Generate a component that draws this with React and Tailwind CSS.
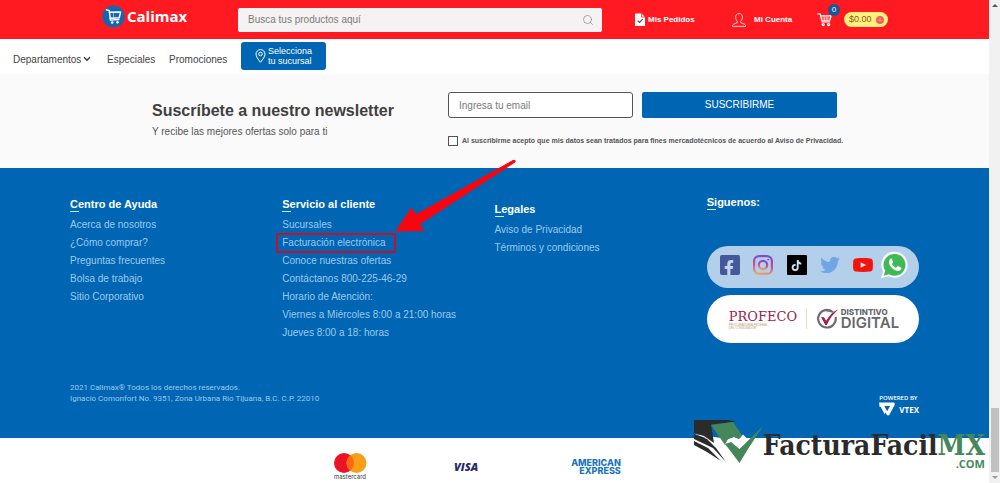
import { FaTwitter, FaTiktok, FaFacebookF } from "react-icons/fa";
import { Search, ChevronDown } from "lucide-react";

const helpLinks = [
  "Acerca de nosotros",
  "¿Cómo comprar?",
  "Preguntas frecuentes",
  "Bolsa de trabajo",
  "Sitio Corporativo",
];
const legalLinks = ["Aviso de Privacidad", "Términos y condiciones"];

function CartIcon({ className }) {
  return (
    <svg viewBox="0 0 16 16" className={className} fill="none" stroke="currentColor" strokeWidth="1.3" strokeLinejoin="round" strokeLinecap="round" aria-hidden="true">
      <path d="M1 2h2.400l2 8.600h8" />
      <path d="M3.900 4.200H15l-1.300 4.600H5" />
      <path d="M7.400 4.400l.6 4.200M10.800 4.400l-.2 4.200M4.600 6.500h9.600" strokeWidth=".7" />
      <circle cx="6.600" cy="13.400" r="1.100" />
      <circle cx="12.400" cy="13.400" r="1.100" />
    </svg>
  );
}

function Header() {
  return (
    <header className="flex h-[39px] items-center bg-[#ff1a21] pl-[102px] text-white">
      <a href="#inicio" className="flex w-[85px] shrink-0 items-center gap-[2px] pb-[7px]">
        <svg viewBox="0 0 24 24" className="size-[23px] shrink-0" aria-hidden="true">
          <circle cx="12" cy="12" r="11.600" fill="#1566b0" />
          <g fill="none" stroke="#fff" strokeWidth="1.500" strokeLinejoin="round" strokeLinecap="round">
            <path d="M4.600 5l3 .9 1.200 9.900 8.800-.6" />
            <path d="M7.800 7.600l11.600-.2-1.400 5.900-9.400.5" />
            <path d="M12 7.800l.2 5.400" strokeWidth=".6" />
          </g>
          <circle cx="10.600" cy="18.300" r="1.300" fill="#fff" />
          <circle cx="16.200" cy="18" r="1.300" fill="#fff" />
        </svg>
        <span className="font-['Open_Sans',sans-serif] text-[15px] leading-5 font-bold">Calimax</span>
      </a>
      <form className="ml-[51px] flex h-6 flex-1 items-center rounded-[2px] bg-[#f4f2f2] pr-2 pl-[10px]" onSubmit={(e) => e.preventDefault()}>
        <input aria-label="Buscar productos" placeholder="Busca tus productos aquí" className="min-w-0 flex-1 bg-transparent text-[10px] text-gray-700 outline-none placeholder:text-[#7d7b7b]" />
        <button aria-label="Buscar" className="text-[#8f8d8d]">
          <Search className="size-3" strokeWidth={1.5} />
        </button>
      </form>
      <nav className="flex w-[387px] shrink-0 items-center pl-[33px] text-[8px] font-bold">
        <a href="#pedidos" className="flex w-[97px] items-center gap-[3px]">
          <svg viewBox="0 0 10 13" className="h-[13px] w-[10px]" aria-hidden="true">
            <path d="M0 .5h6.600L10 4v9H0z" fill="#fff" />
            <path d="M6.600.5V4H10" fill="none" stroke="#ff1a21" strokeWidth=".8" />
            <path d="M2.600 7.600l1.900 1.900 3.200-3.400" fill="none" stroke="#5a4a60" strokeWidth="1.200" />
          </svg>
          Mis Pedidos
        </a>
        <a href="#cuenta" className="flex w-[85px] items-center gap-2">
          <svg viewBox="0 0 14 14" className="size-[14px]" fill="none" stroke="#fff" strokeWidth=".8" strokeLinejoin="round" aria-hidden="true">
            <path d="M7 .6c2.200 0 3.400 1.500 3.400 3.600 0 1.700-.7 3.100-1.700 3.900v1.500l3.600 1.500c.8.400 1.200 1 1.200 2.300H.5c0-1.300.4-1.900 1.200-2.300l3.600-1.500V8.100C4.300 7.300 3.600 5.900 3.600 4.200 3.600 2.100 4.800.6 7 .6z" />
          </svg>
          Mi Cuenta
        </a>
        <a href="#carrito" aria-label="Carrito" className="relative">
          <CartIcon className="size-[15px]" />
          <span className="absolute -top-[8px] left-[11px] flex size-[12px] items-center justify-center rounded-full bg-[#17589b] text-[8px] leading-none font-normal">0</span>
        </a>
        <span className="ml-3 flex h-[15px] items-center gap-1 rounded-full bg-[#fff07d] pr-1 pl-[5px] text-[9px] font-normal text-[#8a5a1c]">
          $0.00
          <svg viewBox="0 0 8 8" className="size-2" aria-hidden="true">
            <circle cx="4" cy="4" r="4" fill="#f0625c" />
            <path d="M2.600 4.500h3M3 3h2" stroke="#fbb3a0" strokeWidth=".8" />
          </svg>
        </span>
      </nav>
    </header>
  );
}

function Nav() {
  return (
    <nav className="flex h-[35px] items-center bg-white pl-[13px] text-[10px] text-[#444]">
      <a href="#departamentos" className="flex w-[94px] items-center pt-[5px]">
        Departamentos
        <ChevronDown className="ml-px size-[10px]" strokeWidth={4} />
      </a>
      <a href="#especiales" className="w-[62px] pt-[5px]">Especiales</a>
      <a href="#promociones" className="w-[72px] pt-[5px]">Promociones</a>
      <button className="mb-[1px] flex h-7 w-[85px] items-center gap-[2px] rounded-[3px] bg-[#0066b3] pl-[14px] text-left text-[9px] leading-[10px] text-white">
        <svg viewBox="0 0 11 14" className="h-[14px] w-[11px] shrink-0" fill="none" stroke="#fff" strokeWidth="1" aria-hidden="true">
          <path d="M5.500 13.300C3 10 1 7.600 1 5.100a4.500 4.500 0 0 1 9 0c0 2.500-2 4.900-4.500 8.200z" />
          <circle cx="5.500" cy="5" r="1.800" />
        </svg>
        <span>Selecciona<br />tu sucursal</span>
      </button>
    </nav>
  );
}

function Newsletter() {
  return (
    <section className="flex h-[94px] bg-[#fafafa] pr-[152px] pl-[152px]">
      <div className="flex-1 pt-[27px]">
        <h2 className="text-[16px] leading-5 font-bold text-[#404040]">Suscríbete a nuestro newsletter</h2>
        <p className="mt-1 text-[10px] leading-[14px] text-[#555]">Y recibe las mejores ofertas solo para ti</p>
      </div>
      <form className="w-[389px] shrink-0 pt-[18px]" onSubmit={(e) => e.preventDefault()}>
        <div className="flex gap-[9px]">
          <input type="email" aria-label="Email" placeholder="Ingresa tu email" className="h-[26px] w-[185px] rounded-[3px] border border-[#555] bg-white px-[10px] text-[10px] outline-none placeholder:text-[#7a7a7a]" />
          <button className="h-[26px] flex-1 rounded-[2px] bg-[#0066b3] pb-[2px] text-[10px] text-white">SUSCRIBIRME</button>
        </div>
        <label className="mt-[18px] flex items-center gap-1 text-[7px] leading-[10px] font-bold whitespace-nowrap text-[#555]">
          <input type="checkbox" className="size-[10px] shrink-0 appearance-none border border-[#555] bg-white checked:bg-[#0066b3]" />
          Al suscribirme acepto que mis datos sean tratados para fines mercadotécnicos de acuerdo al Aviso de Privacidad.
        </label>
      </form>
    </section>
  );
}

function Heading({ children }) {
  return (
    <h3 className="flex flex-col text-[11px] leading-[14px] font-bold text-white after:h-px after:w-[9px] after:bg-[#c9f0dd] after:content-['']">
      {children}
    </h3>
  );
}

function Links({ items }) {
  return items.map((t) => (
    <li key={t}>
      <a href="#info">{t}</a>
    </li>
  ));
}

function SocialBar() {
  return (
    <div className="flex h-[42px] items-center rounded-full bg-[#b3cfea] pb-1 pl-[13px]">
      <a href="#facebook" aria-label="Facebook" className="mr-[13px] flex size-5 items-end justify-end overflow-hidden rounded-[2px] bg-[#46589c] pr-1 text-[#c3d4ee]">
        <FaFacebookF className="-mr-px -mb-px size-4" />
      </a>
      <a href="#instagram" aria-label="Instagram" className="mr-[14px]">
        <svg viewBox="0 0 20 20" className="size-5" fill="none" stroke="url(#ig)" strokeWidth="2.200">
          <defs>
            <linearGradient id="ig" x1="0.600" y1="0" x2="0.400" y2="1">
              <stop offset="0" stopColor="#7a4fd0" />
              <stop offset=".5" stopColor="#c3499f" />
              <stop offset="1" stopColor="#e8a26a" />
            </linearGradient>
          </defs>
          <rect x="1.100" y="1.100" width="17.800" height="17.800" rx="5" />
          <circle cx="10" cy="10" r="4.200" />
          <circle cx="15.200" cy="4.900" r=".5" strokeWidth="1.200" />
        </svg>
      </a>
      <a href="#tiktok" aria-label="TikTok" className="mr-[13px] flex size-5 items-center justify-center rounded-[1px] bg-black text-[#cfe0f3]">
        <FaTiktok className="size-[11px]" />
      </a>
      <a href="#twitter" aria-label="Twitter" className="mr-[13px] text-[#6ea6e6]">
        <FaTwitter className="size-5" />
      </a>
      <a href="#youtube" aria-label="YouTube" className="mr-[7px]">
        <svg viewBox="0 0 20 14" className="h-[14px] w-5">
          <path d="M3 .4C7 0 13 0 17 .4c2 .2 2.700 1.200 2.800 3 .2 2.400.2 4.800 0 7.200-.1 1.800-.8 2.800-2.800 3-4 .4-10 .4-14 0-2-.2-2.700-1.200-2.800-3C0 8.200 0 5.800.2 3.400.3 1.600 1 .6 3 .4z" fill="#f5140c" />
          <path d="M7.600 4.200l5.600 2.800-5.600 2.800z" fill="#d5def0" />
        </svg>
      </a>
      <a href="#whatsapp" aria-label="WhatsApp">
        <svg viewBox="0 0 28 28" className="size-[28px]">
          <path d="M14.500.8a13 13 0 1 1-6 24.500L.9 27.300l2.200-7A13 13 0 0 1 14.500.8z" fill="#fff" />
          <path d="M14.500 3a10.900 10.900 0 1 1-5.600 20.200l-5.200 1.500 1.500-5A10.900 10.900 0 0 1 14.500 3z" fill="#3fb955" />
          <path d="M10.300 7.900c.5-.4 1.200-.4 1.500.2l1.200 2.500c.2.400.1.800-.2 1.200l-.9 1.100c.9 1.800 2.300 3.100 4.200 3.900l1.200-1.400c.3-.4.700-.4 1.100-.2l2.500 1.200c.5.300.6.600.5 1.100-.3 1.600-1.700 2.600-3.300 2.500-4.500-.4-8.800-4.700-9.200-8.700-.1-1.400.5-2.600 1.400-3.400z" fill="#fff" />
        </svg>
      </a>
    </div>
  );
}

function Certification() {
  return (
    <div className="mt-[7px] flex h-12 items-center rounded-full bg-white pl-[22px]">
      <div className="w-[69px] text-[#97264d]">
        <div className="font-['DejaVu_Serif',serif] text-[13px] leading-[15px] whitespace-nowrap">PROFECO</div>
        <div className="text-[3px] leading-[3px] text-[#b5a06c]">PROCURADURÍA FEDERAL<br />DEL CONSUMIDOR</div>
      </div>
      <span className="ml-2 h-5 w-px bg-[#e3dbc6]" />
      <svg viewBox="0 0 23 22" className="ml-[9px] h-[22px] w-[23px]" fill="none" aria-hidden="true">
        <path d="M17 4.300A8.800 8.800 0 1 0 19.600 9" stroke="#6b6d70" strokeWidth="2.200" />
        <path d="M10.400 2.600a8.800 8.800 0 0 1 4.600.6" stroke="#6b6d70" strokeWidth="2.200" />
        <path d="M5 9l3 .3 2.200 3.500C13 7.600 17 3.500 22.500 1.200 17.500 5.500 13.600 10.600 10.800 17H9.300z" fill="#a81e45" />
      </svg>
      <div className="ml-[2px] font-['Inter',sans-serif] text-[#66686b]">
        <div className="text-[8px] leading-[8px] font-extrabold">DISTINTIVO</div>
        <div className="text-[15px] leading-[14px] font-semibold">DIGITAL</div>
      </div>
    </div>
  );
}

function Footer() {
  return (
    <footer className="h-[270px] bg-[#0066b3] px-[70px] pt-[29px] text-[#9cc9ee]">
      <div className="grid h-[178px] grid-cols-4 text-[10px] leading-[18px]">
        <section>
          <Heading>Centro de Ayuda</Heading>
          <ul className="mt-1">
            <Links items={helpLinks} />
          </ul>
        </section>
        <section>
          <Heading>Servicio al cliente</Heading>
          <ul className="mt-1 whitespace-nowrap">
            <Links items={["Sucursales"]} />
            <li>
              <a href="#facturacion" className="relative">
                Facturación electrónica
                <span className="absolute -top-[4px] -left-[6px] h-5 w-[120px] rounded-[2px] border-2 border-[#c0122c]" />
                <svg viewBox="0 0 122 74" className="pointer-events-none absolute -top-[78px] left-[113px] h-[74px] w-[122px] max-w-none" aria-hidden="true">
                  <path d="M1 72L16.500 49 20.500 56 118 1.500Q121 .5 120 3L24.500 65 28.500 71.500z" fill="#f90510" stroke="#f90510" strokeWidth="1" strokeLinejoin="round" />
                </svg>
              </a>
            </li>
            <Links items={["Conoce nuestras ofertas", "Contáctanos 800-225-46-29"]} />
            <li>Horario de Atención:</li>
            <li>Viernes a Miércoles 8:00 a 21:00 horas</li>
            <li>Jueves 8:00 a 18: horas</li>
          </ul>
        </section>
        <section className="pt-[5px]">
          <Heading>Legales</Heading>
          <ul className="mt-1">
            <Links items={legalLinks} />
          </ul>
        </section>
        <section className="-mt-[2px]">
          <Heading>Siguenos:</Heading>
          <div className="mt-9">
            <SocialBar />
            <Certification />
          </div>
        </section>
      </div>
      <div className="flex justify-between pt-[7px]">
        <p className="font-['Roboto',sans-serif] text-[8px] leading-[11px]">
          2021 Calimax® Todos los derechos reservados.
          <br />
          Ignacio Comonfort No. 9351, Zona Urbana Río Tijuana, B.C. C.P. 22010
        </p>
        <div className="pt-[12px] font-['Open_Sans',sans-serif] text-white">
          <div className="text-[6px] leading-[8px] font-semibold">POWERED BY</div>
          <div className="flex items-center gap-1 text-[8px] leading-[13px] font-bold">
            <svg viewBox="0 0 16 14" className="h-[14px] w-4" aria-hidden="true">
              <path fillRule="evenodd" d="M3.200.5h11c1.300 0 2 1.200 1.400 2.400l-5.200 9.800c-.6 1-2 1-2.600 0L6.600 10.500l-1 1.800L1.800 5H.6L0 .5zM5.300 4l2.900 5.300L11.100 4z" fill="#fff" />
            </svg>
            VTEX
          </div>
        </div>
      </div>
    </footer>
  );
}

function Payments() {
  return (
    <section className="flex h-[45px] items-center bg-white pt-[12px] pl-[333px]">
      <svg viewBox="0 0 34 20" className="h-5 w-[34px] shrink-0 -translate-y-1 overflow-visible" aria-hidden="true">
        <circle cx="11" cy="10" r="10" fill="#eb1326" />
        <circle cx="23.500" cy="10" r="10" fill="#f79e1b" />
        <path d="M17.250 2.200a10 10 0 0 1 0 15.600 10 10 0 0 1 0-15.600z" fill="#fb6a10" />
        <text x="17" y="26" textAnchor="middle" fontSize="6" fontFamily="Inter, sans-serif" fill="#3c3a3a">mastercard</text>
      </svg>
      <span className="ml-[87px] font-['Open_Sans',sans-serif] text-[11px] leading-3 font-extrabold text-[#252b6b] italic">VISA</span>
      <span className="ml-[93px] text-right font-['Inter',sans-serif] text-[9px] leading-[8px] font-extrabold text-[#1b75bc]">
        AMERICAN
        <br />
        EXPRESS
      </span>
    </section>
  );
}

function Watermark() {
  return (
    <div className="absolute right-[15px] bottom-[14px] flex items-start">
      <svg viewBox="0 0 70 45" className="-mr-px h-[45px] w-[70px]" aria-hidden="true">
        <path d="M0 15l12 4 8 8 14 17 6-6-9-13 3-5z" fill="#fff" />
        <path d="M0 1h34l8 1.500-25 3L20 24 10 17 0 14z" fill="#2b2b2b" />
        <path d="M0 15l13 5 9 9 10 14L19 29 0 20z" fill="#2b2b2b" />
        <path d="M0 22l14 7 13 13L13 33 0 26z" fill="#2b2b2b" />
        <path d="M17 6l22-3 9 13-3 4.500-5-2.500-6 2.500L31 26z" fill="#46875a" />
        <path d="M34 20.500l6-2.500 5 2.500 4-5 4 4-8 12-14-6z" fill="#fff" />
        <path d="M31 25l6-2 8.500 7L69 7 54 30l-8.500 14z" fill="#46875a" />
      </svg>
      <div className="pt-[14px] text-right">
        <div className="font-['DejaVu_Serif_Condensed','DejaVu_Serif',serif] text-[28px] leading-[26px] font-bold text-[#2b2b2b]">
          FacturaFacil<span className="text-[#46875a]">MX</span>
        </div>
        <div className="font-['Open_Sans',sans-serif] text-[11px] leading-[10px] font-bold text-[#46875a]">.COM</div>
      </div>
    </div>
  );
}

function Scrollbar() {
  return (
    <div className="flex w-[11px] shrink-0 flex-col items-center bg-[#f1f1f1] pt-1 pb-1" aria-hidden="true">
      <svg viewBox="0 0 6 3" className="h-[3px] w-[6px]"><path d="M0 3l3-3 3 3z" fill="#555" /></svg>
      <div className="mt-auto mb-[4px] h-16 w-2 bg-[#c1c1c1]" />
      <svg viewBox="0 0 6 3" className="h-[3px] w-[6px]"><path d="M0 0l3 3 3-3z" fill="#999" /></svg>
    </div>
  );
}

export default function App() {
  return (
    <div className="relative flex bg-white font-['Liberation_Sans',Arial,sans-serif]">
      <div className="min-w-0 flex-1">
        <Header />
        <Nav />
        <main>
          <Newsletter />
        </main>
        <Footer />
        <Payments />
      </div>
      <Scrollbar />
      <Watermark />
    </div>
  );
}
